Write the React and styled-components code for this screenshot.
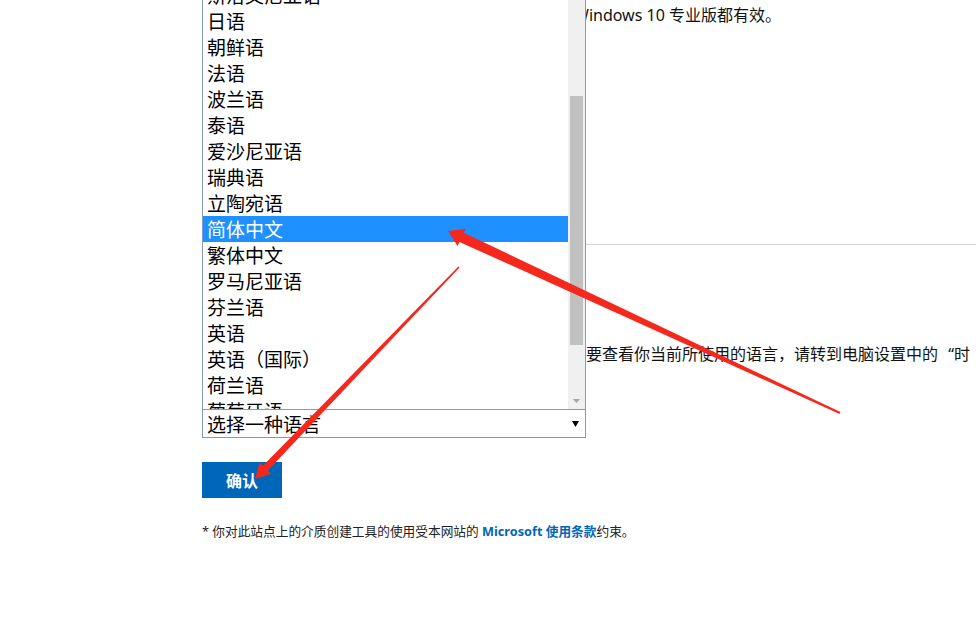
import React from 'react';
import styled, { createGlobalStyle } from 'styled-components';

const GlobalStyle = createGlobalStyle`
  html, body {
    margin: 0;
    padding: 0;
    background: #ffffff;
    overflow: hidden;
  }
  body {
    font-family: "Noto Sans", "Noto Sans CJK SC", sans-serif;
  }
`;

const Page = styled.div`
  position: relative;
  width: 976px;
  height: 629px;
  overflow: hidden;
  box-sizing: border-box;
  padding-left: 202px;
  color: #111;
  font-family: "Noto Sans", "Noto Sans CJK SC", sans-serif;
`;

const Column = styled.div`
  width: 774px;
  display: flex;
  flex-direction: column;
  align-items: flex-start;
`;

const Para = styled.p`
  margin: ${(p) => p.$top}px 0 0 ${(p) => p.$indent}px;
  font-size: 16px;
  line-height: 24px;
  white-space: nowrap;
`;

const WrapPara = styled.p`
  margin: ${(p) => p.$top}px 0 0;
  width: 770px;
  text-indent: ${(p) => p.$indent}px;
  font-size: 16px;
  line-height: 24px;
`;

const Quote = styled.span`
  display: inline-block;
  width: 16px;
  text-indent: 0;
  text-align: right;
`;

const Divider = styled.hr`
  align-self: stretch;
  margin: 217px 0 0;
  height: 0;
  border: 0;
  border-top: 1px solid #d4d4d4;
`;

const SelectWrap = styled.div`
  position: relative;
  margin-top: 19px;
  width: 384px;
  z-index: 2;
`;

const Select = styled.div`
  height: 29px;
  box-sizing: border-box;
  border: 1px solid #7f9db9;
  background: #fff;
  display: flex;
  align-items: center;
  justify-content: space-between;
  padding: 0 6px 0 4px;
  font-size: 19px;
  line-height: 27px;
  color: #000;
  font-family: "Noto Sans CJK SC", sans-serif;
`;

const Listbox = styled.div`
  position: absolute;
  left: 0;
  right: 0;
  bottom: 100%;
  height: 453px;
  border: 1px solid #7f9db9;
  border-bottom: 0;
  background: #fff;
  display: flex;
`;

const Options = styled.div`
  flex: 1;
  min-width: 0;
  overflow: hidden;
  display: flex;
  flex-direction: column;
`;

const Option = styled.div`
  flex: none;
  height: 26px;
  line-height: 26px;
  padding-left: 4px;
  font-size: 19px;
  white-space: nowrap;
  font-family: "Noto Sans CJK SC", sans-serif;
  background: ${(p) => (p.$selected ? '#1e90ff' : 'transparent')};
  color: ${(p) => (p.$selected ? '#ffffff' : '#000000')};
`;

const Scrollbar = styled.div`
  flex: none;
  width: 17px;
  background: #f0f0f0;
  display: flex;
  flex-direction: column;
  align-items: center;
`;

const Thumb = styled.div`
  flex: none;
  width: 13px;
  background: #c1c1c1;
`;

const ScrollSpacer = styled.div`
  flex: 1;
`;

const ArrowButton = styled.div`
  flex: none;
  width: 17px;
  height: 17px;
  display: flex;
  align-items: center;
  justify-content: center;
`;

const ConfirmButton = styled.button`
  margin-top: 24px;
  width: 80px;
  height: 36px;
  padding: 0;
  border: 0;
  background: #0067b8;
  color: #ffffff;
  font-family: "Noto Sans CJK SC", sans-serif;
  font-weight: bold;
  font-size: 16px;
  line-height: 36px;
`;

const Footer = styled.p`
  margin: 24px 0 0;
  font-size: 12.7px;
  line-height: 18px;
  color: #222;
  white-space: nowrap;
`;

const Link = styled.a`
  color: #0067b8;
  font-weight: bold;
  text-decoration: none;
`;

const Overlay = styled.svg`
  position: absolute;
  left: 0;
  top: 0;
  pointer-events: none;
  z-index: 5;
`;

const languages = [
  '希伯来语',
  '斯洛文尼亚语',
  '日语',
  '朝鲜语',
  '法语',
  '波兰语',
  '泰语',
  '爱沙尼亚语',
  '瑞典语',
  '立陶宛语',
  '简体中文',
  '繁体中文',
  '罗马尼亚语',
  '芬兰语',
  '英语',
  '英语（国际）',
  '荷兰语',
  '葡萄牙语',
  '西班牙语',
];

function arrowPoints(tip, tail, headLen, headHalf, shaftHead, shaftTail) {
  const dx = tail[0] - tip[0];
  const dy = tail[1] - tip[1];
  const len = Math.hypot(dx, dy);
  const u = [dx / len, dy / len];
  const p = [-u[1], u[0]];
  const b = [tip[0] + u[0] * headLen, tip[1] + u[1] * headLen];
  const pt = (c, s) => [c[0] + p[0] * s, c[1] + p[1] * s];
  const pts = [
    tip,
    pt(b, headHalf),
    pt(b, shaftHead),
    pt(tail, shaftTail),
    pt(tail, -shaftTail),
    pt(b, -shaftHead),
    pt(b, -headHalf),
  ];
  return pts.map((q) => `${q[0].toFixed(1)},${q[1].toFixed(1)}`).join(' ');
}

export default function App() {
  return (
    <>
      <GlobalStyle />
      <Page>
        <Column>
          <Para $top={3} $indent={372}>Windows 10 专业版都有效。</Para>
          <Divider />
          <WrapPara $top={97} $indent={384}>
            要查看你当前所使用的语言，请转到电脑设置中的<Quote>“</Quote>时间和语言”，然后转到“区域和语言”。
          </WrapPara>
          <SelectWrap>
            <Listbox>
              <Options>
                {languages.map((l) => (
                  <Option key={l} $selected={l === '简体中文'}>
                    {l}
                  </Option>
                ))}
              </Options>
              <Scrollbar>
                <ArrowButton />
                <Thumb style={{ marginTop: 123, height: 249 }} />
                <ScrollSpacer />
                <ArrowButton>
                  <svg width="7" height="4" viewBox="0 0 7 4">
                    <path d="M0 0 H7 L3.5 4 Z" fill="#a3a3a3" />
                  </svg>
                </ArrowButton>
              </Scrollbar>
            </Listbox>
            <Select>
              <span>选择一种语言</span>
              <svg width="7" height="6" viewBox="0 0 7 6">
                <path d="M0 0 H7 L3.5 6 Z" fill="#000" />
              </svg>
            </Select>
          </SelectWrap>
          <ConfirmButton>确认</ConfirmButton>
          <Footer>
            * 你对此站点上的介质创建工具的使用受本网站的 <Link>Microsoft 使用条款</Link>约束。
          </Footer>
        </Column>
        <Overlay width="976" height="629" viewBox="0 0 976 629">
          <polygon
            points={arrowPoints([448, 231], [840, 413], 15, 9.5, 5, 1)}
            fill="#f5281e"
          />
          <polygon
            points={arrowPoints([255, 479], [459, 267], 15, 8, 3.5, 0.8)}
            fill="#f5281e"
          />
        </Overlay>
      </Page>
    </>
  );
}
